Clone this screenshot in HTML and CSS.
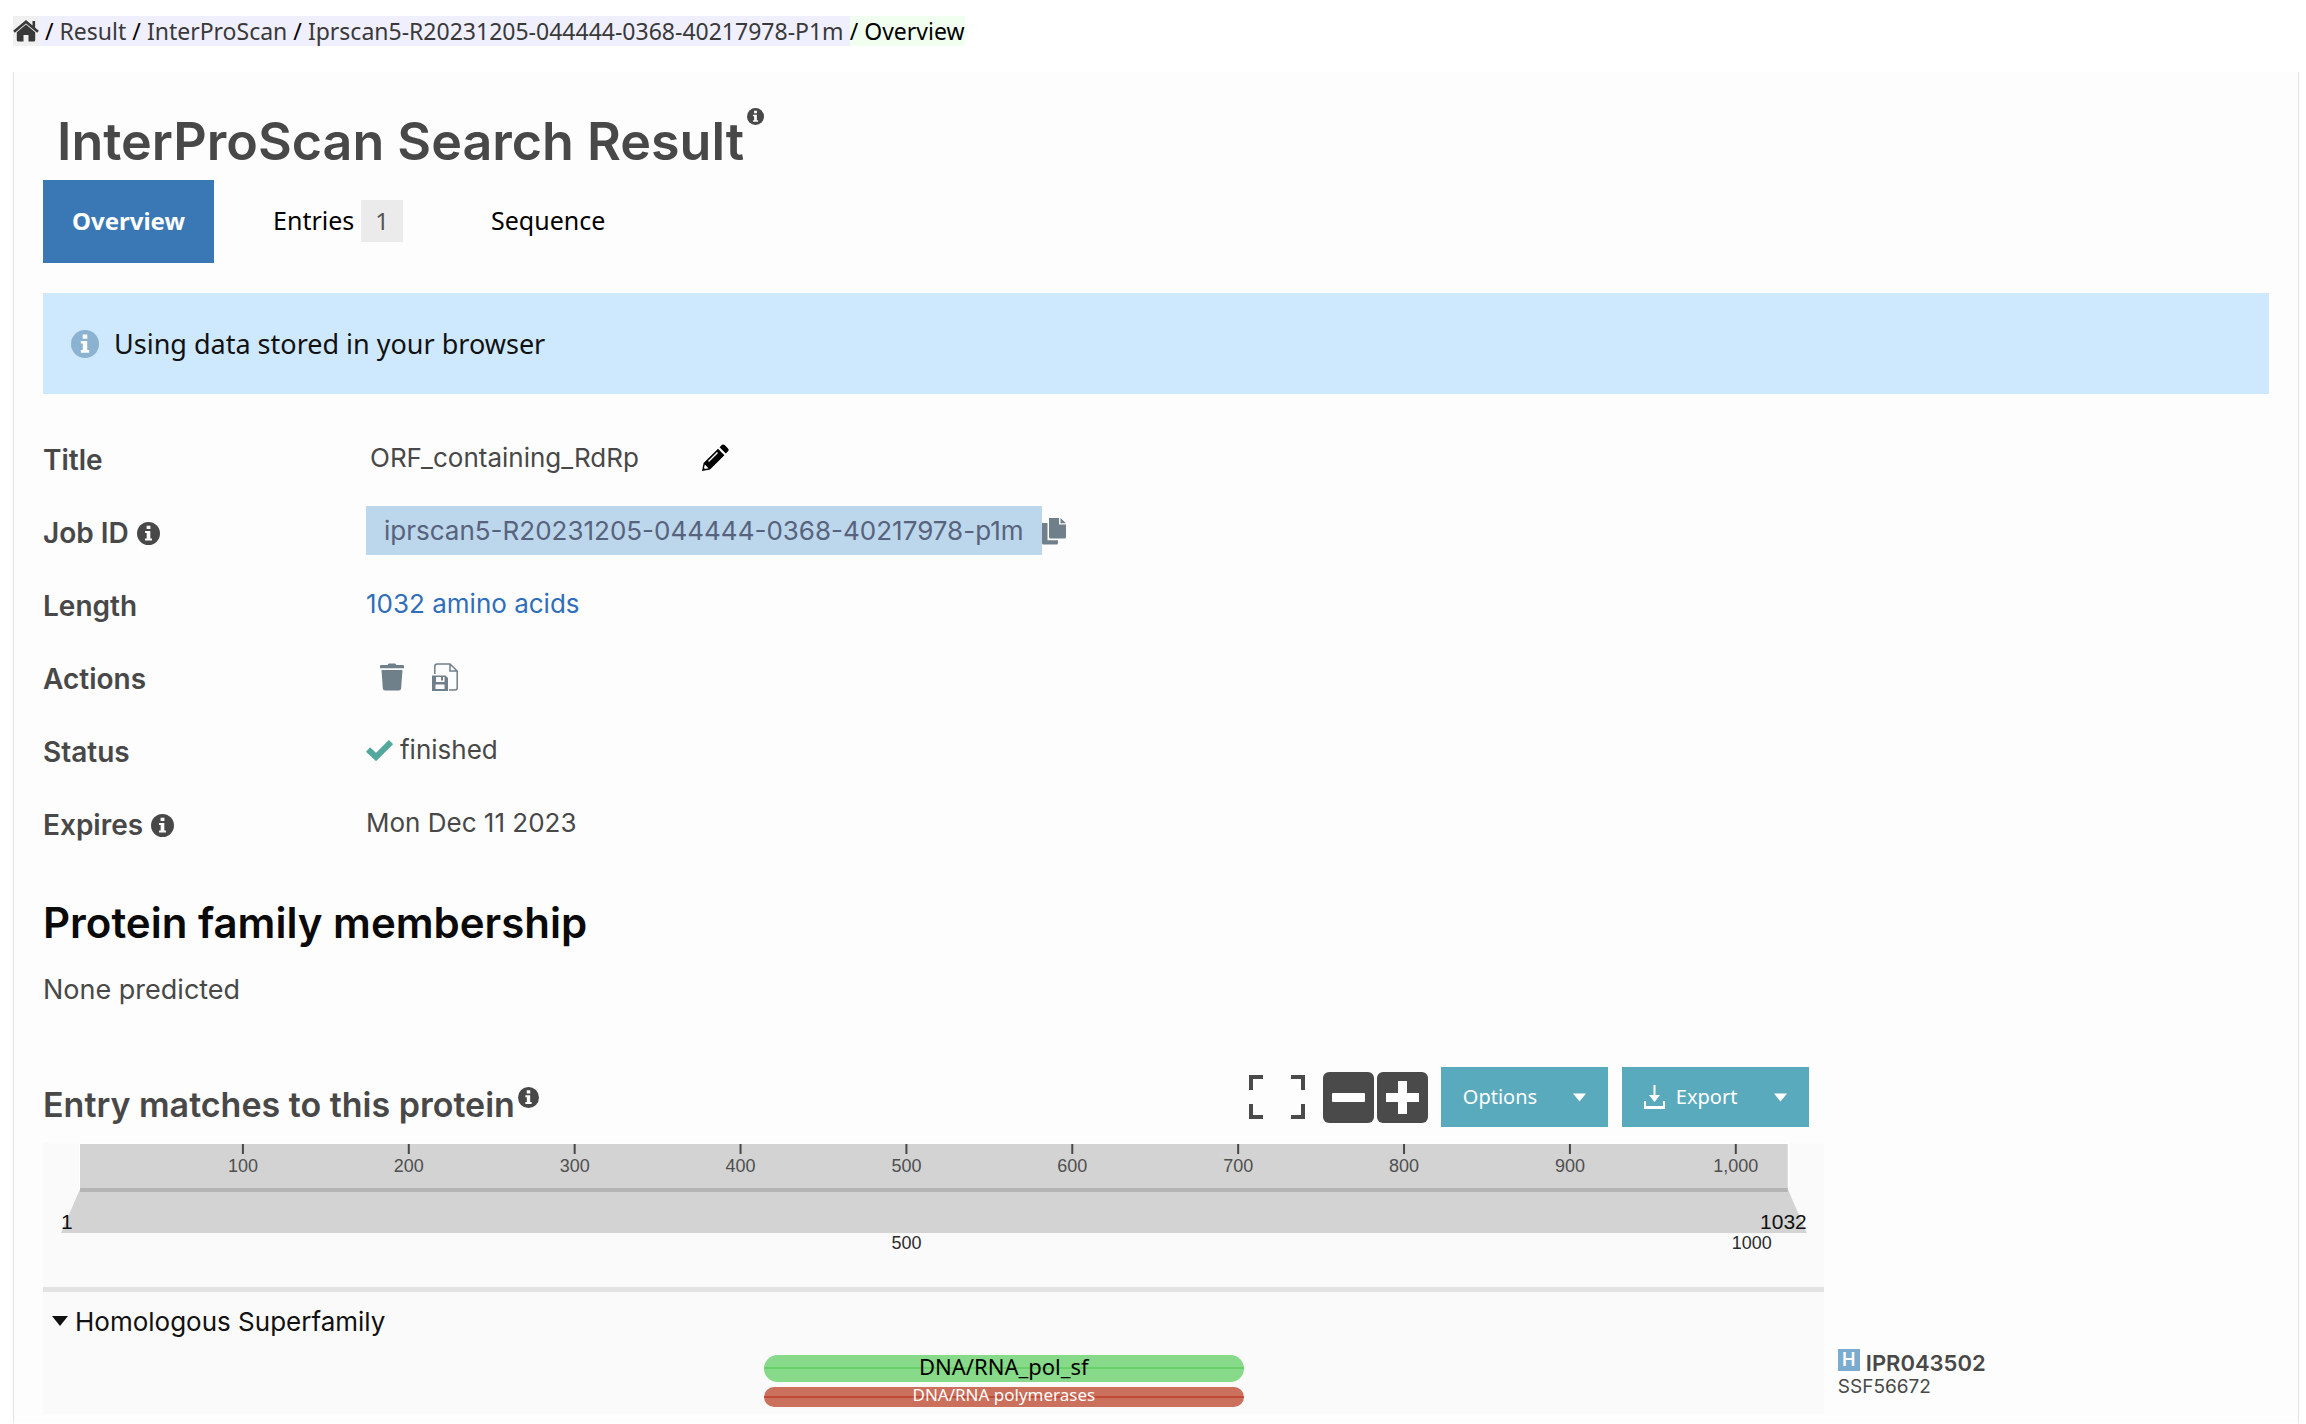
FILE: index.html
```html
<!DOCTYPE html>
<html lang="en">
<head>
<meta charset="utf-8">
<title>InterProScan Search Result</title>
<link rel="stylesheet" href="styles.css">
</head>
<body>
<svg class="defs" aria-hidden="true">
  <symbol id="info" viewBox="0 0 24 24"><circle cx="12" cy="12" r="12" fill="currentColor"/><path class="cut" d="M10 3.8h4v3.6h-4zM8.4 9.4h5.5v7.8h1.7v2.2H8.4v-2.2h1.7v-5.6H8.4z"/></symbol>
  <symbol id="caret" viewBox="0 0 16 10"><path d="M0 0h16L8 10z" fill="currentColor"/></symbol>
</svg>
<nav class="crumbs" aria-label="Breadcrumb">
  <a class="crumb-home" href="#" aria-label="Home"><svg viewBox="0 0 26 22"><path d="M13 4.5 3.8 12.2V20q0 1.500 1.500 1.500H10.500V15h5v6.500h5.200q1.500 0 1.500-1.500v-7.800z" fill="currentColor"/><path d="M1 11.800 13 1.700 25 11.800M20.800 1v7" fill="none" stroke="currentColor" stroke-width="2.600"/></svg></a>
  <span class="crumb-path"><i>/</i><a href="#">Result</a><i>/</i><a href="#">InterProScan</a><i>/</i><a href="#">Iprscan5-R20231205-044444-0368-40217978-P1m</a></span>
  <span class="crumb-here"><i>/</i><span>Overview</span></span>
</nav>
<main class="panel">
  <h1>InterProScan Search Result<svg class="info-h1"><use href="#info"/></svg></h1>
  <nav class="tabs" aria-label="Result sections">
    <a class="tab active" href="#">Overview</a>
    <a class="tab" href="#">Entries <span class="badge">1</span></a>
    <a class="tab" href="#">Sequence</a>
  </nav>
  <div class="callout"><svg class="info-callout"><use href="#info"/></svg>Using data stored in your browser</div>
  <dl class="details">
    <dt><label for="job-title">Title</label></dt>
    <dd><input id="job-title" type="text" value="ORF_containing_RdRp" readonly><button class="icon-btn black" aria-label="Rename"><svg width="28" height="28" viewBox="0 0 28 28"><path d="M1 27l1.600-8L17 4.800l6.400 6.400L9 25.500zM18.600 3.200 21 .8q1.300-.9 2.700.3l3.300 3.300q1.200 1.400.2 2.700L24.800 9.600z" fill="currentColor"/><path d="M3.800 20.500l3.800 3.800-3.600.8-1-1z" fill="#fdfdfd"/><path d="M7.500 17.500 16.500 8.500" stroke="#fdfdfd" stroke-width="1.500"/></svg></button></dd>
    <dt>Job ID <svg class="info-dt"><use href="#info"/></svg></dt>
    <dd><mark>iprscan5-R20231205-044444-0368-40217978-p1m</mark><button class="icon-btn" aria-label="Copy"><svg width="24" height="28" viewBox="0 0 24 28"><path d="M7 1h10v6.500h7V20q0 1.500-1.500 1.500h-14Q7 21.500 7 20zM18.500 1 24 6.200h-5.500zM0 6h5.500v17.300H16v2.700q0 1.500-1.500 1.500h-13Q0 27.500 0 26z" fill="currentColor"/></svg></button></dd>
    <dt>Length</dt>
    <dd><a href="#">1032 amino acids</a></dd>
    <dt>Actions</dt>
    <dd class="actions"><button class="icon-btn" aria-label="Delete"><svg width="24" height="28" viewBox="0 0 24 28"><path d="M1 2h6.500l1.200-1.600h6.600L16.500 2H23q1 0 1 1v2.200H0V3q0-1 1-1zM1.500 7h21l-1.400 18.500q-.2 2-2.200 2H5q-2 0-2.200-2z" fill="currentColor"/></svg></button><button class="icon-btn" aria-label="Save"><svg width="26" height="28" viewBox="0 0 26 28" fill="none" stroke="currentColor" stroke-width="1.500"><path d="M2.800 11V3.500q0-2.500 2.500-2.500H18l7.200 7v16.800q0 2.200-2.200 2.200h-6M18 1v7h7"/><path fill="currentColor" stroke="none" fill-rule="evenodd" d="M0 12.500h13.500L16 15v13H0zM4 14v5h8.500v-5H11v3.500H9V14zM3.500 21.500V26h9v-4.500z"/></svg></button></dd>
    <dt>Status</dt>
    <dd><svg class="check" width="27" height="22" viewBox="0 0 27 22"><path d="M2 10.500 10 18 25 3" fill="none" stroke="#52a89c" stroke-width="6"/></svg>finished</dd>
    <dt>Expires <svg class="info-dt"><use href="#info"/></svg></dt>
    <dd>Mon Dec 11 2023</dd>
  </dl>
  <h2>Protein family membership</h2>
  <p class="none">None predicted</p>
  <section class="matches">
    <header class="toolbar">
      <h3>Entry matches to this protein<svg class="info-h3"><use href="#info"/></svg></h3>
      <button class="icon-btn full" aria-label="Full screen"><svg width="56" height="44" viewBox="0 0 56 44"><path d="M2 15V2h12M42 2h12v13M54 29v13H42M14 42H2V29" fill="none" stroke="currentColor" stroke-width="4"/></svg></button>
      <button class="zoom" aria-label="Zoom out"><svg viewBox="0 0 51 51"><rect x="9" y="21" width="33" height="9" rx="1" fill="#fff"/></svg></button>
      <button class="zoom" aria-label="Zoom in"><svg viewBox="0 0 51 51"><path d="M9 21h12V9h9v12h12v9H30v12h-9V30H9z" fill="#fff"/></svg></button>
      <button class="drop options">Options<svg class="caret"><use href="#caret"/></svg></button>
      <button class="drop export"><svg class="download" viewBox="0 0 21 24"><path d="M9.500 0h2v10H16l-5.500 7L5 10h4.500zM0 16h2v5h17v-5h2v8H0z" fill="currentColor"/></svg>Export<svg class="caret"><use href="#caret"/></svg></button>
    </header>
    <div class="viewer">
      <svg class="ruler" viewBox="0 0 1782 144" role="img" aria-label="Sequence positions 1 to 1032">
        <rect x="36" y="0" width="1712" height="46" fill="#fff"/>
        <path d="M37 1H1746V46L1765 90H18L37 46z" fill="#d3d3d3"/>
        <path d="M37 45H1746v4H37z" fill="#b4b4b4"/>
        <path d="M200 1v10M366 1v10M532 1v10M698 1v10M864 1v10M1030 1v10M1196 1v10M1362 1v10M1528 1v10M1694 1v10" stroke="#484848" stroke-width="2"/>
        <g class="scale" fill="#4f4f4f"><text x="200" y="29">100</text><text x="366" y="29">200</text><text x="532" y="29">300</text><text x="698" y="29">400</text><text x="864" y="29">500</text><text x="1030" y="29">600</text><text x="1196" y="29">700</text><text x="1362" y="29">800</text><text x="1528" y="29">900</text><text x="1694" y="29">1,000</text></g>
        <g class="scale" fill="#2c2c2c"><text x="864" y="106">500</text><text x="1710" y="106">1000</text></g>
        <g class="ends"><text x="18" y="86">1</text><text x="1765" y="86" text-anchor="end">1032</text></g>
      </svg>
      <div class="tracks">
        <button class="group"><svg class="group-caret"><use href="#caret"/></svg>Homologous Superfamily</button>
        <div class="bar entry" style="margin-left:40.480%;width:26.950%"><span>DNA/RNA_pol_sf</span></div>
        <div class="bar signature" style="margin-left:40.480%;width:26.950%"><span>DNA/RNA polymerases</span></div>
      </div>
      <div class="labels">
        <a class="entry-link" href="#"><span class="type">H</span>IPR043502</a>
        <a class="sig-link" href="#">SSF56672</a>
      </div>
    </div>
  </section>
</main>
</body>
</html>
```
FILE: styles.css
```css
* { box-sizing: border-box; }
body {
  margin: 0;
  background: #fff;
  color: #484848;
  font-family: Inter, "Liberation Sans", sans-serif;
  font-size: 27px;
}
a { color: inherit; text-decoration: none; }
button { border: 0; padding: 0; background: none; color: inherit; font: inherit; cursor: pointer; }
svg { display: block; flex: none; }
.defs { position: absolute; width: 0; height: 0; }
.cut { fill: #fdfdfd; }

.crumbs {
  display: flex;
  margin: 16px 13px 26px;
  font: 23px/30px "Noto Sans", sans-serif;
  color: #393939;
}
.crumbs i { font-style: normal; color: #000; }
.crumb-home { display: flex; align-items: center; width: 26px; background: #f0f0f0; }
.crumb-home svg { width: 26px; height: 22px; }
.crumb-path, .crumb-here { display: flex; gap: 6px; }
.crumb-path { padding: 0 6px; background: #f0effe; }
.crumb-here { background: #f1fff0; color: #000; }

.panel {
  margin: 0 7px 0 13px;
  padding: 36px 29px 9px;
  border: solid #e4e4e4;
  border-width: 0 1px;
  background: #fdfdfd;
}
h1, h2, h3, p, dl, dd { margin: 0; }
h1 { display: flex; gap: 3px; padding-left: 14px; font-size: 52px; line-height: 68px; font-weight: 600; }
.info-h1 { width: 17px; height: 17px; }

.tabs { display: flex; gap: 30px; margin-top: 4px; font: 25px/83px "Noto Sans", sans-serif; color: #000; }
.tab { display: flex; align-items: center; gap: 7px; height: 83px; padding: 0 29px 2px; }
.tab.active { background: #3a78b5; color: #fff; font-size: 24px; font-weight: 700; }
.badge { padding: 0 14px; background: #ebebeb; color: #555; font-size: 24px; line-height: 42px; }

.callout {
  display: flex;
  align-items: center;
  gap: 15px;
  height: 101px;
  margin: 30px 0 28px;
  padding-left: 28px;
  background: #cee8fd;
  color: #111;
  font: 27px/36px "Noto Sans", sans-serif;
}
.info-callout { width: 28px; height: 28px; color: #8bb2d1; }
.info-callout .cut { fill: #cee8fd; }

.details { display: grid; grid-template-columns: 323px 1fr; grid-auto-rows: 73px; font-size: 26px; }
dt, dd { display: flex; align-items: center; }
dt { gap: 8px; padding-top: 2px; font-size: 28px; font-weight: 600; }
dd { padding-bottom: 2px; }
.info-dt { width: 23px; height: 23px; margin-top: 2px; }
dd a { color: #2f6eba; }
input { width: 335px; padding: 0 4px; border: 0; background: none; color: inherit; font: inherit; }
mark { padding: 0 18px; background: #bcd6eb; color: #57637d; line-height: 49px; }
.icon-btn { color: #70808b; }
.black { color: #000; }
.actions { gap: 28px; padding-left: 14px; }
.check { margin-right: 7px; }

h2 { margin-top: 37px; color: #0a0a0a; font-size: 42px; line-height: 52px; font-weight: 600; }
.none { margin-top: 21px; line-height: 40px; }

.matches { margin-top: 57px; }
.toolbar { display: flex; align-items: center; width: 80%; padding-right: 15px; margin-bottom: 16px; }
h3 { display: flex; gap: 3px; margin-right: auto; padding-top: 16px; font-size: 34px; line-height: 44px; font-weight: 600; }
.info-h3 { width: 21px; height: 21px; margin-top: 4px; }
.full { margin-right: 18px; color: #4a4a4a; }
.zoom { width: 51px; height: 51px; margin-right: 3px; border-radius: 6px; background: #4a4a4a; }
.drop {
  display: flex;
  align-items: center;
  justify-content: space-between;
  height: 60px;
  margin-left: 14px;
  padding: 0 22px;
  background: #5aaabd;
  color: #fff;
  font: 20px/28px "Noto Sans", sans-serif;
}
.options { width: 167px; margin-left: 10px; }
.export { width: 187px; }
.download { width: 21px; height: 24px; margin-right: 11px; }
.caret { width: 13px; height: 9px; margin-left: auto; }

.viewer { display: grid; grid-template-columns: 4fr 1fr; }
.ruler { width: 100%; height: auto; background: #fafafa; font-family: "Liberation Sans", sans-serif; }
.scale { font-size: 18px; text-anchor: middle; }
.ends { font-size: 21px; fill: #111; }
.tracks { grid-column: 1; padding-bottom: 7px; border-top: 5px solid #e2e2e2; background: #fafafa; }
.group { display: flex; align-items: center; gap: 7px; width: 100%; height: 63px; padding: 0 0 4px 9px; color: #111; font-size: 26px; }
.group-caret { width: 16px; height: 10px; }
.bar { display: flex; align-items: center; justify-content: center; font-family: "Noto Sans", sans-serif; white-space: nowrap; }
.entry {
  height: 27px;
  margin-bottom: 5px;
  border-radius: 14px;
  background: linear-gradient(#6ad06a, #6ad06a) center / 100% 2px no-repeat #87da89;
  color: #000;
  font-size: 22px;
  line-height: 24px;
}
.signature {
  height: 20px;
  border-radius: 10px;
  background: linear-gradient(#c04a34, #c04a34) center / 100% 2px no-repeat #cb705d;
  color: #fff;
  font-size: 17px;
  line-height: 18px;
}
.entry span, .signature span { padding-bottom: 4px; }
.labels { grid-column: 2; padding: 62px 0 0 14px; }
.labels a { display: flex; }
.entry-link { gap: 6px; font-size: 22px; line-height: 28px; font-weight: 600; }
.type { width: 22px; height: 22px; background: #7cabd0; color: #fff; font-size: 18px; line-height: 22px; text-align: center; }
.sig-link { font-size: 19px; line-height: 20px; }
```
